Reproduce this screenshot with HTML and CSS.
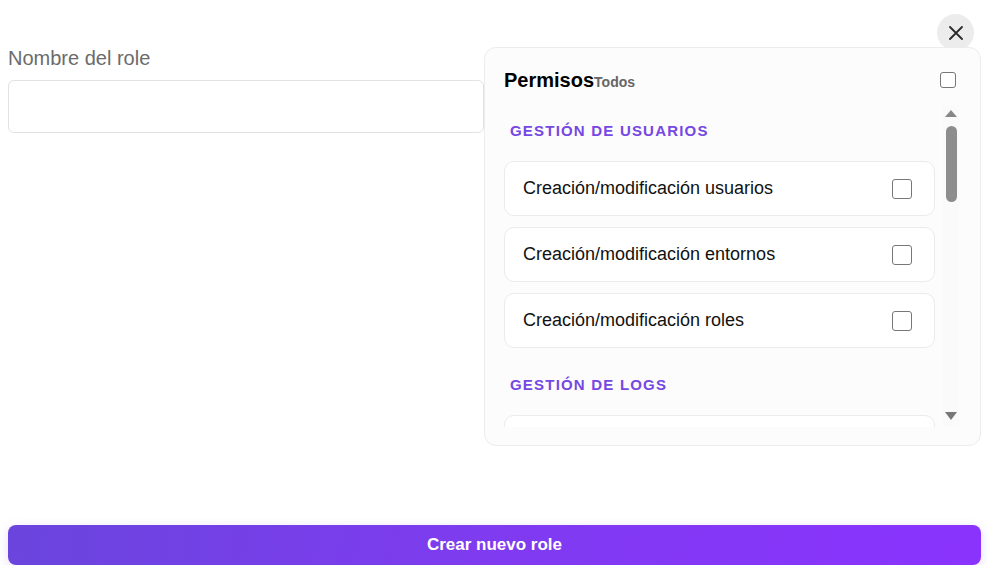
FILE: index.html
```html
<!DOCTYPE html>
<html lang="es">
<head>
    <meta charset="UTF-8">
    <meta name="viewport" content="width=device-width, initial-scale=1.0">
    <title>Nuevo role</title>
    <link rel="stylesheet" href="styles.css">
</head>
<body>
<div class="modal">
    <div class="top-row">
        <div class="form-group">
            <label for="roleName">Nombre del role</label>
            <input type="text" id="roleName" name="roleName">
        </div>
        <div class="side">
            <button class="close-btn" type="button" aria-label="Cerrar">
                <svg width="14" height="14" viewBox="0 0 14 14">
                    <path d="M1 1L13 13M13 1L1 13" stroke="#2b2b2b" stroke-width="1.8" stroke-linecap="round"/>
                </svg>
            </button>
            <div class="permissions">
                <div class="perm-header">
                    <div class="perm-title">Permisos<span class="all">Todos</span></div>
                    <input type="checkbox" class="check check-small">
                </div>
                <div class="perm-body">
                    <div class="perm-list">
                        <div class="section">
                            <div class="section-title">Gestión de usuarios</div>
                            <label class="perm-item">
                                <span>Creación/modificación usuarios</span>
                                <input type="checkbox" class="check">
                            </label>
                            <label class="perm-item">
                                <span>Creación/modificación entornos</span>
                                <input type="checkbox" class="check">
                            </label>
                            <label class="perm-item">
                                <span>Creación/modificación roles</span>
                                <input type="checkbox" class="check">
                            </label>
                        </div>
                        <div class="section">
                            <div class="section-title">Gestión de logs</div>
                            <label class="perm-item">
                                <span>Visualización de logs</span>
                                <input type="checkbox" class="check">
                            </label>
                        </div>
                    </div>
                    <div class="scrollbar">
                        <span class="arrow-up"></span>
                        <span class="thumb"></span>
                        <span class="arrow-down"></span>
                    </div>
                </div>
            </div>
        </div>
    </div>
    <button class="submit-btn" type="button">Crear nuevo role</button>
</div>
</body>
</html>
```

FILE: styles.css
```css
body {
    font-family: "Liberation Sans", Arial, sans-serif;
    margin: 0;
    padding: 0;
    background: #fff;
    color: #111;
}
.modal {
    padding: 14px 7px 0 8px;
}
.top-row {
    display: flex;
    align-items: flex-start;
}
.form-group {
    width: 476px;
    padding-top: 33px;
}
.form-group label {
    display: block;
    font-size: 20px;
    color: #6b6b6b;
    line-height: 22px;
    margin-bottom: 11px;
}
.form-group input {
    box-sizing: border-box;
    width: 100%;
    height: 53px;
    border: 1px solid #e2e2e2;
    border-radius: 6px;
    padding: 0 12px;
    font-size: 16px;
    outline: none;
}
.side {
    flex: 1;
    display: flex;
    flex-direction: column;
    align-items: flex-end;
}
.close-btn {
    width: 37px;
    height: 37px;
    border-radius: 50%;
    border: none;
    background: #ececec;
    display: flex;
    align-items: center;
    justify-content: center;
    margin-right: 7px;
    margin-bottom: -4px;
    padding: 0;
    cursor: pointer;
}
.permissions {
    box-sizing: border-box;
    align-self: stretch;
    height: 399px;
    border: 1px solid #ececec;
    border-radius: 12px;
    background: #fcfcfc;
    padding: 19px 21px 18px 19px;
    display: flex;
    flex-direction: column;
}
.perm-header {
    display: flex;
    align-items: center;
    justify-content: space-between;
    height: 26px;
    margin-bottom: 12px;
}
.perm-title {
    font-size: 20px;
    font-weight: bold;
    color: #000;
}
.perm-title .all {
    font-size: 14px;
    color: #666;
}
.perm-body {
    flex: 1;
    min-height: 0;
    display: flex;
}
.perm-list {
    flex: 1;
    overflow: hidden;
}
.scrollbar {
    width: 16px;
    margin-left: 8px;
    background: #fafafa;
    display: flex;
    flex-direction: column;
    align-items: center;
    padding: 5px 0 7px;
    box-sizing: border-box;
}
.arrow-up {
    width: 0;
    height: 0;
    border-left: 6px solid transparent;
    border-right: 6px solid transparent;
    border-bottom: 7px solid #888;
}
.thumb {
    width: 11px;
    height: 76px;
    border-radius: 6px;
    background: #8d8d8d;
    margin-top: 9px;
}
.arrow-down {
    width: 0;
    height: 0;
    margin-top: auto;
    border-left: 6px solid transparent;
    border-right: 6px solid transparent;
    border-top: 8px solid #777;
}
.section {
    padding-top: 17px;
}
.section-title {
    font-size: 15px;
    font-weight: bold;
    color: #7547e3;
    text-transform: uppercase;
    letter-spacing: 1.2px;
    line-height: 18px;
    padding-left: 6px;
    margin-bottom: 21px;
}
.perm-item {
    box-sizing: border-box;
    display: flex;
    align-items: center;
    justify-content: space-between;
    height: 55px;
    background: #fff;
    border: 1px solid #ebebeb;
    border-radius: 10px;
    padding: 0 22px 0 18px;
    margin-bottom: 11px;
    font-size: 18px;
    color: #111;
}
.check {
    appearance: none;
    box-sizing: border-box;
    width: 20px;
    height: 20px;
    margin: 0;
    border: 1.5px solid #777;
    border-radius: 3px;
    background: #fff;
}
.check-small {
    width: 16px;
    height: 16px;
    margin-right: 3px;
}
.submit-btn {
    display: block;
    width: 100%;
    height: 40px;
    margin-top: 79px;
    border: none;
    border-radius: 8px;
    background: linear-gradient(100deg, #6a45dd 0%, #7f3bf0 50%, #8a33fe 100%);
    color: #fff;
    font-family: "Liberation Sans", Arial, sans-serif;
    font-size: 17px;
    font-weight: bold;
    box-shadow: 0 3px 12px rgba(120, 70, 230, 0.18);
    cursor: pointer;
}
```
